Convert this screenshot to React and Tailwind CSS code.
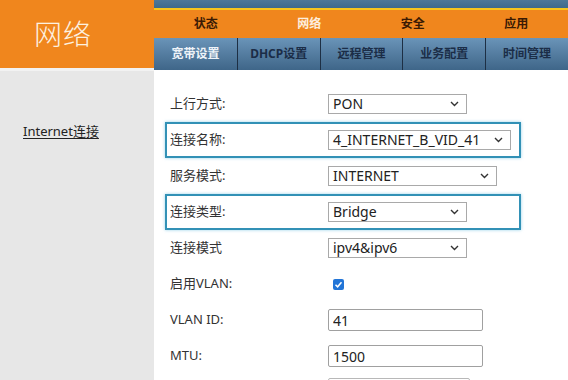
import { useState } from "react";

const topTabs = ["状态", "网络", "安全", "应用"];
const subTabs = ["宽带设置", "DHCP设置", "远程管理", "业务配置", "时间管理"];

function Chevron() {
  return (
    <svg width="9" height="6" viewBox="0 0 9 6" className="shrink-0">
      <path d="M1 1 L4.5 4.5 L8 1" fill="none" stroke="#333" strokeWidth="1.4" />
    </svg>
  );
}

function FakeSelect({ value, width }) {
  return (
    <div
      className="h-[20px] border border-[#a9a9a9] bg-white flex items-center justify-between pl-[4px] pr-[7px] text-[14px] text-[#222] leading-none"
      style={{ width }}
    >
      <span>{value}</span>
      <Chevron />
    </div>
  );
}

function Row({ label, highlight, children }) {
  return (
    <div
      className={
        "h-[36px] shrink-0 w-[356px] flex items-center pl-[3px] border-2 " +
        (highlight ? "border-[#3291b6] shadow-[0_0_3px_rgba(80,180,220,0.6)]" : "border-transparent")
      }
    >
      <div className="w-[158px] text-[13px] text-[#333]">{label}</div>
      {children}
    </div>
  );
}

export default function App() {
  const [vlan, setVlan] = useState(true);

  return (
    <div
      className="w-[568px] h-[380px] overflow-hidden flex bg-white"
      style={{ fontFamily: '"Noto Sans", "Noto Sans CJK SC", sans-serif' }}
    >
      {/* left column */}
      <div className="w-[154px] shrink-0 flex flex-col bg-[#e7e7e7]">
        <div className="h-[68px] shrink-0 bg-[#f0861d] flex items-center pl-[34px]">
          <span className="text-[28px] font-light text-[#fdf1e0] tracking-[1px]">网络</span>
        </div>
        <div className="h-[3px] shrink-0 bg-[#f2f2f2]" />
        <div className="pt-[47px] pl-[23px]">
          <a className="text-[13px] text-[#222] underline underline-offset-2">Internet连接</a>
        </div>
      </div>

      {/* right column */}
      <div className="flex-1 flex flex-col">
        <div className="h-[8px] shrink-0 bg-gradient-to-b from-[#4d7898] to-[#3e6a8b]" />
        <div className="h-[2px] shrink-0 bg-[#f7c51c]" />
        <div className="h-[28px] shrink-0 bg-[#f0861d] grid grid-cols-4">
          {topTabs.map((t) => (
            <div
              key={t}
              className={
                "flex items-center justify-center text-[12px] font-bold " +
                (t === "网络" ? "text-[#fdeedd]" : "text-[#3a1a04]")
              }
            >
              {t}
            </div>
          ))}
        </div>
        <div className="h-[32px] shrink-0 grid grid-cols-5 bg-gradient-to-b from-[#6a94b8] to-[#3f6689]">
          {subTabs.map((t, i) => (
            <div
              key={t}
              className={
                "flex items-center justify-center text-[12px] font-bold " +
                (i > 0 ? "border-l border-[#1d2f44] " : "") +
                (i === 0 ? "text-[#eef3f8]" : "text-[#1b2d47]")
              }
            >
              {t}
            </div>
          ))}
        </div>

        <div className="flex flex-col pt-[16px] pl-[11px]">
          <Row label="上行方式:">
            <FakeSelect value="PON" width={139} />
          </Row>
          <Row label="连接名称:" highlight>
            <FakeSelect value="4_INTERNET_B_VID_41" width={183} />
          </Row>
          <Row label="服务模式:">
            <FakeSelect value="INTERNET" width={169} />
          </Row>
          <Row label="连接类型:" highlight>
            <FakeSelect value="Bridge" width={139} />
          </Row>
          <Row label="连接模式">
            <FakeSelect value="ipv4&ipv6" width={139} />
          </Row>
          <Row label="启用VLAN:">
            <button
              onClick={() => setVlan(!vlan)}
              className={
                "ml-[5px] w-[11px] h-[11px] rounded-[2px] flex items-center justify-center " +
                (vlan ? "bg-[#2275d7]" : "bg-white border border-[#888]")
              }
            >
              {vlan && (
                <svg width="9" height="9" viewBox="0 0 9 9">
                  <path d="M1.5 4.8 L3.6 6.8 L7.5 2.2" fill="none" stroke="white" strokeWidth="1.5" />
                </svg>
              )}
            </button>
          </Row>
          <Row label="VLAN ID:">
            <input
              defaultValue="41"
              className="w-[155px] h-[22px] border-[1.5px] border-[#a0a0a0] rounded-[2px] px-[4px] text-[14px] text-[#222] outline-none"
            />
          </Row>
          <Row label="MTU:">
            <input
              defaultValue="1500"
              className="w-[155px] h-[22px] border-[1.5px] border-[#a0a0a0] rounded-[2px] px-[4px] text-[14px] text-[#222] outline-none"
            />
          </Row>
          <Row label="">
            <div className="w-[142px] h-[22px] border-[1.5px] border-[#b8b8b8] rounded-[2px] self-start mt-[2px]" />
          </Row>
        </div>
      </div>
    </div>
  );
}
